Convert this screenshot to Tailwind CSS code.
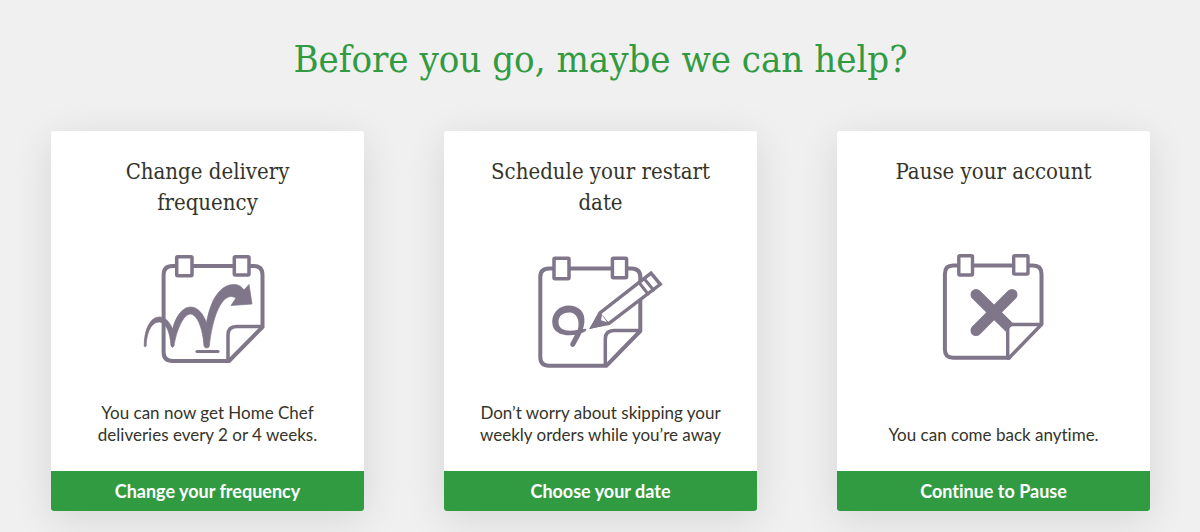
<!DOCTYPE html>
<html lang="en">
<head>
    <meta charset="UTF-8">
    <meta name="viewport" content="width=device-width, initial-scale=1.0">
    <title>Before you go</title>
    <script src="https://cdn.jsdelivr.net/npm/@tailwindcss/browser@4"></script>
</head>
<body class="bg-[#f0f0f0] min-h-screen font-['Lato',sans-serif] text-[#34342a] [font-variant-ligatures:none]">

<main class="pt-[35px] pb-5 pl-[51px] pr-[50px]">
    <h1 class="font-['DejaVu_Serif_Condensed','DejaVu_Serif',serif] text-[38px] leading-[48px] text-center text-[#319b42]">Before you go, maybe we can help?</h1>

    <div class="mt-12 grid grid-cols-3 gap-20 text-center">
        <!-- Change frequency -->
        <section class="flex flex-col bg-white rounded-[3px] overflow-hidden shadow-[0_8px_40px_rgba(0,0,0,0.11)]">
            <div class="flex-1 flex flex-col items-center px-8 py-[25px]">
                <h2 class="min-h-[62px] px-2 font-['DejaVu_Serif_Condensed','DejaVu_Serif',serif] text-[22px] leading-[31px]">Change delivery frequency</h2>
                <svg class="my-[22px] w-[151px] h-[140px]" viewBox="2 0 151 140" fill="none" stroke="#80768a" stroke-width="4" stroke-linejoin="round" stroke-linecap="round" aria-hidden="true">
                    <path d="M132.5 87V35Q132.5 26 123.5 26H42.5Q33.6 26 33.6 35V112Q33.6 121 42.5 121H99L132.5 87"/>
                    <path d="M98 121V95Q98 86.5 106.5 86.5H132.5" stroke-width="3.5"/>
                    <rect x="46.7" y="16.7" width="15.3" height="19" rx="1" fill="#fff" stroke-width="3.5"/>
                    <rect x="104.3" y="16.7" width="14.7" height="18.4" rx="1" fill="#fff" stroke-width="3.5"/>
                    <path d="M14.3 106C14 90 20 77 29.5 77C35 77 39 81 42.7 89C45 78 52 67 60.5 67C68 67 73.5 74 76.5 83C80 62 89 44.5 104 44.5C109 44.5 112 47 114 50L119 44.5L122 64L101 65.5L106 58C104 57 102 56.5 101 56.5C90 57 82 80 79.3 106Q79 108 76.7 108Q74.5 108 74 106C73 90 68 75 60.5 74C53 74 46 92 44 106Q42.5 108.5 41 106C40 92 36 82.5 29.5 82C21 82 16.5 93 16.2 106Q15.2 107.5 14.3 106Z" fill="#80768a" stroke="#80768a" stroke-width="0.7"/>
                    <path d="M67 111.5H88" stroke-width="3.2"/>
                </svg>
                <p class="mt-auto text-[17px] leading-[22px]">You can now get Home Chef deliveries every 2 or 4 weeks.</p>
            </div>
            <button type="button" class="h-10 bg-[#319b42] text-white text-lg font-bold">Change your frequency</button>
        </section>

        <!-- Schedule restart -->
        <section class="flex flex-col bg-white rounded-[3px] overflow-hidden shadow-[0_8px_40px_rgba(0,0,0,0.11)]">
            <div class="flex-1 flex flex-col items-center px-8 py-[25px]">
                <h2 class="min-h-[62px] px-2 font-['DejaVu_Serif_Condensed','DejaVu_Serif',serif] text-[22px] leading-[31px]">Schedule your restart date</h2>
                <svg class="my-[22px] w-[151px] h-[140px]" viewBox="0 0 151 140" fill="none" stroke="#80768a" stroke-width="4" stroke-linejoin="round" stroke-linecap="round" aria-hidden="true">
                    <path d="M115.3 91V37Q115.3 28.5 106.5 28.5H24Q15.3 28.5 15.3 37V117Q15.3 125.7 24 125.7H81.5L115.3 91"/>
                    <path d="M80.3 125V99Q80.3 90.4 89 90.4H115.3" stroke-width="3.5"/>
                    <rect x="29" y="18.3" width="15" height="20.4" rx="1" fill="#fff" stroke-width="3.5"/>
                    <rect x="87.4" y="18.3" width="14.2" height="19.5" rx="1" fill="#fff" stroke-width="3.5"/>
                    <!-- pencil -->
                    <g stroke-linejoin="miter" stroke-width="3.4">
                        <path d="M67.5 86.5L75 73L126 33.2L135.3 44.3L84 83.3Z" fill="#fff"/>
                        <path d="M114 42.5L123 54M119 38.5L128.5 50" stroke-width="3"/>
                        <path d="M65 88.3L75 73L84 83.3Z" fill="#80768a" stroke-width="1"/>
                        <path d="M77 75L76 80.2L82 82.2Z" fill="#fff" stroke="none"/>
                    </g>
                    <path d="M60.5 91.3C50 97.5 27.2 98 27.2 82C27.2 72 35 65.5 43.5 65.5C53 65.5 59 71 59.4 79C59.7 87 57 93 50 105.5C48.5 108 44.5 107 45.3 103.5L49 96.5C53.5 90.5 54 86 53.2 80.5C52 75 48.5 72.5 44 72.5C38 72.5 33.5 76 33.5 82C33.5 90 42 92 52 90L60 88.7Q62.5 89 60.5 91.3Z" fill="#80768a" stroke="none"/>
                </svg>
                <p class="mt-auto text-[17px] leading-[22px]">Don’t worry about skipping your weekly orders while you’re away</p>
            </div>
            <button type="button" class="h-10 bg-[#319b42] text-white text-lg font-bold">Choose your date</button>
        </section>

        <!-- Pause -->
        <section class="flex flex-col bg-white rounded-[3px] overflow-hidden shadow-[0_8px_40px_rgba(0,0,0,0.11)]">
            <div class="flex-1 flex flex-col items-center px-8 py-[25px]">
                <h2 class="min-h-[62px] px-2 font-['DejaVu_Serif_Condensed','DejaVu_Serif',serif] text-[22px] leading-[31px]">Pause your account</h2>
                <svg class="my-[22px] w-[151px] h-[140px]" viewBox="-2 0 151 140" fill="none" stroke="#80768a" stroke-width="4" stroke-linejoin="round" stroke-linecap="round" aria-hidden="true">
                    <path d="M56 54.5L92 90M92 54.5L56 90.5" stroke-width="11"/>
                    <path d="M87.7 118V90Q87.7 84.5 93 84.5H121.5L89 118Z" fill="#fff" stroke-width="3.4"/>
                    <path d="M121.5 84V34Q121.5 25.6 113 25.6H33Q24.9 25.6 24.9 34V109.5Q24.9 117.7 33 117.7H89"/>
                    <rect x="38.8" y="15.8" width="13.7" height="19.2" rx="1" fill="#fff" stroke-width="3.4"/>
                    <rect x="93.7" y="15.8" width="14.3" height="18.3" rx="1" fill="#fff" stroke-width="3.4"/>
                </svg>
                <p class="mt-auto text-[17px] leading-[22px]">You can come back anytime.</p>
            </div>
            <button type="button" class="h-10 bg-[#319b42] text-white text-lg font-bold">Continue to Pause</button>
        </section>
    </div>
</main>

</body>
</html>
